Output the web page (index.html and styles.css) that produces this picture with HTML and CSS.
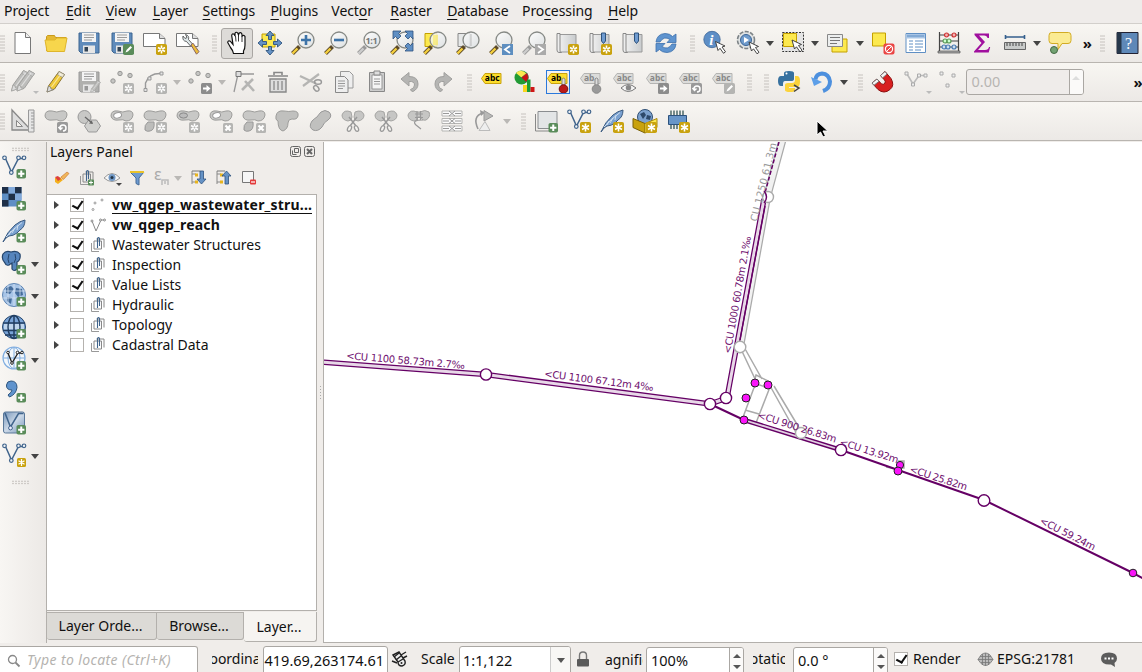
FILE: index.html
```html
<!DOCTYPE html>
<html lang="en">
<head>
<meta charset="utf-8">
<title>Map editor</title>
<link rel="stylesheet" href="styles.css">
</head>
<body>
<svg class="defs" aria-hidden="true">
<defs>
<linearGradient id="lens" x1="0" y1="0" x2="1" y2="1"><stop offset="0" stop-color="#fff"/><stop offset="1" stop-color="#d8dde0"/></linearGradient>
<linearGradient id="paper" x1="0" y1="0" x2="1" y2="0"><stop offset="0" stop-color="#eee"/><stop offset="1" stop-color="#c8cbcd"/></linearGradient>
<linearGradient id="sky" x1="0" y1="0" x2="1" y2="1"><stop offset="0" stop-color="#7796ba"/><stop offset=".5" stop-color="#ccd9e8"/><stop offset="1" stop-color="#7796ba"/></linearGradient>
<g id="b-star"><rect x="13" y="13" width="11" height="11" rx="1.8" fill="var(--badge,#c9a20e)"/><path d="M18.5 14.5v8M15 16.5l7 4M22 16.5l-7 4" stroke="#fff" stroke-width="1.6"/></g>
<g id="b-star2"><use href="#b-star"/><circle cx="18.5" cy="18.5" r="1" fill="var(--badge,#c9a20e)"/></g>
<g id="b-plus"><rect x="14.500" y="14" width="9.500" height="9.500" rx="1.800" fill="#5a8c5a"/><path d="M19.250 15.600v6.300M16.100 18.750h6.300" stroke="#fff" stroke-width="2"/></g>
<g id="b-arrow"><rect x="13" y="13" width="11" height="11" rx="1.5" fill="#8c8c8c"/><path d="M15 17.500h3.500v-2.500l4 3.500-4 3.500v-2.500H15z" fill="#fff"/></g>
<g id="b-rot"><rect x="13" y="13" width="11" height="11" rx="1.500" fill="#999"/><path d="M16 19a3 3 0 1 1 3 3M14.500 18l2 2.500 2-2" fill="none" stroke="#fff" stroke-width="1.500"/></g>
<g id="b-x"><rect x="14" y="14" width="10" height="10" rx="1.500" fill="#b5b5b3"/><path d="M16.500 16.500l5 5M21.500 16.500l-5 5" stroke="#fff" stroke-width="2.200"/></g>
<g id="b-pen"><rect x="13" y="13" width="11" height="11" rx="1.800" fill="var(--badge,#5a8c5a)"/><path d="M15.500 21.500l1-2.500 4-4 1.500 1.500-4 4z" fill="#fff"/></g>
<g id="cursor"><path d="M0 0l2.500 9 2-2.200 3.500 5 2-1.500-3.500-4.800 3-1z" fill="#fff" stroke="#333" stroke-width=".9"/></g>
<g id="new"><path d="M4 1.500h10.500l5 5V22.500H4z" fill="#fff" stroke="#777"/><path d="M14.500 1.500v5h5" fill="#eee" stroke="#777"/></g>
<g id="open"><path d="M2.500 20V5.500l1-1h7l1 2H22v3" fill="#e5b933" stroke="#c99a1b"/><path d="M1 9h10l2-2h10l-2.500 13.500H3z" fill="#f7d64c" stroke="#dfb52b"/></g>
<g id="disk"><path d="M2 2h20v20H4l-2-2z" fill="var(--disk,#5f8bbb)" stroke="var(--line,#3d6590)"/><path d="M5 2h14v9H5z" fill="#f4f4f4"/><path d="M7 4h10M7 6.500h10M7 9h8" stroke="#999" stroke-width="1"/><path d="M6 14.500h12V22H6z" fill="#e6e6e6"/><path d="M7.500 16h3.500v4.500H7.500z" fill="var(--line,#345)"/></g>
<g id="layout"><path d="M.5 2.500h16l5.500 5v8H.5z" fill="#fff" stroke="#777"/><path d="M16.500 2.500v5H22" fill="#ddd" stroke="#777"/></g>
<g id="wrench"><path d="M7 5q-1 5 3.500 5.500l4 4.500 2-2-4-4.500q1-4-3-5l1.500 3-2 1z" fill="#dfe8ea" stroke="#555" stroke-width=".9"/><path d="M15 14l2-1.800 6 8.500-2.500 2.500z" fill="#edbd3a" stroke="#866"/></g>
<g id="hand"><path d="M7 22.500Q6.500 19.500 4 16.500L1.200 11.500q.3-2.300 2.600-1.300l2.700 3.300L5.200 4.500Q5.500 2 7.700 3.200L8.500 5V2.300q1.200-2 2.800-.2L12 4l.5-1.700q1.800-1.600 2.800.4l.3 2.300q1.700-1.600 2.900.5V14q0 4-1.500 6v2.500z" transform="translate(1.500)" fill="#fff" stroke="#111" stroke-width="1.200"/><path d="M10.500 5l.5 5.500M13.500 4v6.500M17 5v6" stroke="#222" stroke-width=".9"/></g>
<g id="pan"><path d="M4 3h13v13H4z" fill="#fce94f" stroke="#c4a000"/><path d="M12 0l4 4.500h-2.500v4h-3v-4H8zM12 24l4-4.500h-2.500v-4h-3v4H8zM0 12l4.500-4v2.500h4v3h-4V16zM24 12l-4.500-4v2.500h-4v3h4V16z" fill="#6592c5" stroke="#2d527d" stroke-width=".9"/></g>
<g id="mag"><path d="M8.500 15.500L1.500 22.500" stroke="var(--hd,#5d4b2a)" stroke-width="4"/><path d="M6.500 17.500l-5 5" stroke="var(--hf,#f5cf3e)" stroke-width="2.400"/><circle cx="15" cy="9" r="8" fill="url(#lens)" fill-opacity=".8" stroke="#878a86" stroke-width="1.300"/></g>
<g id="zin"><use href="#mag"/><path d="M15 4v10M10 9h10" stroke="#3d73a8" stroke-width="2.600"/></g>
<g id="zout"><use href="#mag"/><path d="M10 9h10" stroke="#3d73a8" stroke-width="2.600"/></g>
<g id="z11"><use href="#mag"/><text x="8.500" y="12.500" class="t11">1:1</text></g>
<g id="zfull"><use href="#mag"/><path d="M3 0h8L8.500 2.500 11 5 8 8 5.500 5.500 3 8zM23 0v8l-2.500-2.500L18 8l-3-3 2.500-2.500L15 0zM23 20h-8l2.500-2.500L15 15l3-3 2.500 2.500L23 12z" fill="#5f8fc4" stroke="#2d527d" stroke-width=".8"/></g>
<g id="zsel"><path d="M2 2.500h12v13H2z" fill="#fce94f" stroke="#c4a000"/><use href="#mag"/><path d="M10 4h5v10h-5z" fill="#fce94f" opacity=".55"/></g>
<g id="zlay"><path d="M2 2.500h12v13H2z" fill="#e6e8e8" stroke="#888"/><use href="#mag"/><path d="M15 3v12" stroke="#bbb"/></g>
<g id="zprev"><use href="#mag"/><path d="M13 13h11v11H13z" fill="#5d8ec0"/><path d="M21 15l-5 3.500 5 3.500" fill="none" stroke="#fff" stroke-width="1.800"/></g>
<g id="znext"><use href="#mag"/><path d="M13 13h11v11H13z" fill="#aaa"/><path d="M16 15l5 3.500-5 3.500" fill="none" stroke="#fff" stroke-width="1.800"/></g>
<g id="roll"><path d="M5 3.500h16V21H6" fill="url(#paper)" stroke="#999"/><path d="M2 2.500h3V19q-.5 2.500 1.500 2.500H4Q2 21.500 2 19z" fill="#eee" stroke="#888"/></g>
<g id="mark"><path d="M13.500 2h4v8l-2 2.500-2-2.500z" fill="#6f9bd0" stroke="#2d527d"/></g>
<g id="refresh"><path d="M2 11Q3 3 11 2.500q5 0 7.500 3L22 3v8.500h-9L16 8.500Q10 4.500 6 11z" fill="#5f94cf" stroke="#3c70ac" stroke-width=".8"/><path d="M22 13q-1 8-9 8.500-5 0-7.500-3L2 21v-8.500h9L8 15.500q6 4 10-2.500z" fill="#5f94cf" stroke="#3c70ac" stroke-width=".8"/></g>
<g id="info"><circle cx="9" cy="8.500" r="8.200" fill="#5d8ec6" stroke="#3b6597" stroke-width=".8"/><text x="6.300" y="14" class="ti">i</text><use href="#cursor" x="12.500" y="10.500"/></g>
<g id="gear"><circle cx="10" cy="9" r="8.500" fill="#e0e3e4" stroke="#7d8386" stroke-width="1.600" stroke-dasharray="4 1.500"/><circle cx="10" cy="9" r="5.500" fill="#6f9bcc" stroke="#3b6597"/><path d="M8 6l5 3-5 3z" fill="#fff"/><use href="#cursor" x="13" y="11"/></g>
<g id="select"><path d="M1.500 1.500h21v19h-21z" fill="#e4e4e4" stroke="#333" stroke-dasharray="2 1.300"/><path d="M2.500 2.500h13v13h-13z" fill="#fce94f" stroke="#c4a000"/><use href="#cursor" x="11" y="9"/></g>
<g id="form"><path d="M6 8h15v13H6z" fill="#fce94f" stroke="#c4a000"/><path d="M1.500 3.500h15v12h-15z" fill="#eceeee" stroke="#888"/><path d="M4 6.500h10M4 9.500h10M4 12.500h7" stroke="#777"/></g>
<g id="desel"><path d="M1.500 2h13v13h-13z" fill="#fce94f" stroke="#c4a000"/><rect x="12.500" y="12.500" width="11" height="11" rx="2" fill="#ea4545"/><circle cx="18" cy="18" r="3.600" fill="none" stroke="#fff" stroke-width="1.200"/><path d="M15.500 20.500l5-5" stroke="#fff"/></g>
<g id="table"><path d="M2 2.500h19.500v19H2z" fill="#fff" stroke="#5f8fc4"/><path d="M2.500 3h18.500v4.500H2.500z" fill="#a9c5e5"/><path d="M5 10h4M5 13h4M5 16h4M5 19h4M11 10h8M11 13h8M11 16h8M11 19h6M3 5h17" stroke="#5f8fc4"/></g>
<g id="abacus"><path d="M2.500 1v19.500M21.500 1v19.500M2 4h20M2 10h20M2 16h20" stroke="#444" stroke-width="1.200"/><path d="M1 20h22v2H1z" fill="#aaa" stroke="#555" stroke-width=".7"/><g stroke-width="1.200"><g fill="#f6b2b2" stroke="#c33"><circle cx="9.500" cy="4" r="2"/><circle cx="17" cy="4" r="2"/></g><g fill="#cfc" stroke="#5a9a5a"><circle cx="8" cy="10" r="2"/><circle cx="12" cy="10" r="2"/></g><g fill="#cde" stroke="#4b7db5"><circle cx="7" cy="16" r="2"/><circle cx="11" cy="16" r="2"/><circle cx="17" cy="16" r="2"/></g></g></g>
<g id="sigma"><path d="M4.500 2.500H19V7h-1.500Q17 4.500 14 4.500H9l6 6.500-7 8h7q3.500 0 4-3h1.200l-1.500 5.500H4v-1L11.500 12 4.500 4z" fill="#a00f9e"/></g>
<g id="ruler"><path d="M2 6h20M2.500 4v4M21.500 4v4" stroke="#355f8d" stroke-width="1.600"/><path d="M1.500 11.500h21v7h-21z" fill="#c9cbca" stroke="#666"/><path d="M4 12v3M7 12v3M10 12v3M13 12v3M16 12v3M19 12v3" stroke="#444"/></g>
<g id="tip"><path d="M3.500 1.500h17q2.500 0 2.500 3v5q0 3-3 3h-6L10 18.500V12.500H4q-3 0-3-3v-5q0-3 2.500-3z" fill="#fbeb93" stroke="#d2ab24"/><circle cx="6" cy="19" r="3.500" fill="#72a272" stroke="#446b44"/></g>
<g id="book"><path d="M3 1.500h21v21H3z" fill="#5e88b8" stroke="#223"/><path d="M3 1.500h4.500v21H3z" fill="#26374b"/><text x="11" y="17.500" class="tq">?</text></g>
<g id="pencil"><path d="M3 22l1.500-6L15 1.500l5.500 3-10 14.500z" fill="var(--pen,#efc939)" stroke="var(--pl,#8c7430)"/><path d="M15 1.500l5.500 3-2 3-5-3z" fill="var(--tip,#eee8d0)" stroke="var(--pl,#888)" stroke-width=".7"/><path d="M4.500 16l2 1 .5 2 3 .5L3 22z" fill="#ddd" stroke="var(--pl,#777)" stroke-width=".7"/><path d="M7.500 17L17 4" stroke="#fff" opacity=".5" stroke-width="1.200"/></g>
<g id="pencils"><use href="#pencil" x="-2.500" y="-1"/><use href="#pencil" x="3" y="-1"/></g>
<g id="dots"><g fill="#c5c5c3" stroke="#979795"><circle cx="3" cy="11" r="2.200"/><circle cx="10" cy="3.500" r="2.200"/><circle cx="20" cy="5.500" r="2.200"/></g></g>
<g id="curve"><path d="M2.500 20V13Q6 3 18 3.500" fill="none" stroke="#999" stroke-width="1.400"/><path d="M1 18.500h3v3H1zM5 7h3v3H5zM17 2h3v3h-3z" fill="#e4e4e4" stroke="#999"/></g>
<g id="vertex"><path d="M1 22L5 4M8 4h13" stroke="#999" stroke-width="1.300"/><path d="M3 1.500h5v5H3z" fill="#ddd" stroke="#777"/><path d="M9 20L20 9M12 11l9 10" stroke="#b5b5b3" stroke-width="2.600"/></g>
<g id="trash"><path d="M2 6h20M8 5V2.500h8V5" stroke="#888" fill="none" stroke-width="1.600"/><path d="M4 9h16v13H4z" fill="#ddd" stroke="#888" stroke-width="1.400"/><path d="M8 11v9M12 11v9M16 11v9" stroke="#999" stroke-width="1.600"/></g>
<g id="cut"><path d="M1 6l16 7.500M4 16L20 4" stroke="#b5b5b3" stroke-width="2.200"/><ellipse cx="19" cy="12" rx="3.500" ry="2.200" fill="none" stroke="#999" stroke-width="1.400"/><ellipse cx="17" cy="18.500" rx="2.200" ry="3.200" transform="rotate(-40 17 18)" fill="none" stroke="#999" stroke-width="1.400"/></g>
<g id="copy"><path d="M8.500 1.500h9l3.500 3.500v13H8.500z" fill="#eee" stroke="#999"/><path d="M3.500 6.500h9L16 10v12.500H3.500z" fill="#eee" stroke="#888"/><path d="M6 11h7M6 13.500h7M6 16h7M6 18.500h5" stroke="#999"/></g>
<g id="paste"><path d="M4.500 2.500h15v19h-15z" fill="#ccc" stroke="#888"/><path d="M7 5h10v14H7z" fill="#f5f5f5" stroke="#999"/><path d="M9 1h6v4H9z" fill="#ddd" stroke="#888"/><path d="M9 9h6M9 11.500h6M9 14h6" stroke="#999"/></g>
<g id="undo"><path d="M3 9l8-6.500v4q9 0 9 7.500 0 5-5 7.500-2 0-2.500-2 4-1 4-4.500 0-4-5.500-3.500v4.500z" fill="#b5b5b3" stroke="#a0a09e"/></g>
<g id="tag"><path d="M1.500 8.500L5 3.500h16v10H5z" fill="var(--tag,#fcdd2c)" stroke="var(--tl,#c9a20e)"/></g>
<g id="abc"><use href="#tag"/><text x="4.800" y="11.300" class="tabc">abc</text></g>
<g id="ab"><use href="#tag"/><text x="5" y="11.300" class="tabc">ab</text></g>
<g id="pin"><path d="M17.500 9v8" stroke="#ddd" stroke-width="3"/><path d="M16 17V9q1.500-2 3 0v8" fill="none" stroke="#888"/><circle cx="17.500" cy="19" r="4.300" fill="var(--pin,#bc1a1a)" stroke="var(--pinl,#701010)"/></g>
<g id="diag"><circle cx="8.500" cy="7.500" r="7" fill="#229a35"/><path d="M8.500 7.500L3 3Q8-2 14 4z" fill="#fce94f"/><path d="M8.500 7.500L14 3q3 6-1 9z" fill="#c91414" stroke="#555" stroke-width=".5"/><path d="M10 15h4v7h-4z" fill="#f8d41d"/><path d="M14 9.500h3.500V22H14z" fill="#1a9b36"/><path d="M17.500 17h4v5h-4z" fill="#cf1616"/></g>
<g id="eye"><path d="M9 18q7-7 15 0-8 7-15 0z" fill="#f4f4f4" stroke="#777"/><circle cx="16.500" cy="17.800" r="2.700" fill="#888"/></g>
<g id="python"><path d="M7 7V3q0-2 5-2t5 2v6q0 2-3 2H8q-2 0-2 3v2H4q-3 0-3-5t3-5h8" fill="#37719f"/><path d="M18 6h2q3 0 3 5 0 6-3 6h-8v1h6v2q0 2-5 2t-5-2v-5q0-2 3-2h4q3 0 3-3z" fill="#fbd33b"/><circle cx="9.500" cy="3.500" r="1" fill="#fff"/><path d="M17 15l5 3-5 3.500" fill="none" stroke="#444" stroke-width="1.500"/></g>
<g id="reload"><path d="M5.500 9.500Q6 4 12 3.500q7 .5 8 8 0 7-7 9.500" fill="none" stroke="#4d90de" stroke-width="4"/><path d="M1 7l3 9 8-4z" fill="#5d9fe8"/></g>
<g id="magnet"><path d="M1 13l5-4 4.500 5q2 1 3.500-1 1-2-1-3.500l-3.500-4L14 1.500l6 7q4 7-1 11-6 5-12 0z" fill="#d81f1f" stroke="#8c1010"/><path d="M1 13l5-4 2 2.300-5 4zM9.500 5.500L14 1.500l2 2.500-4.500 4z" fill="#f6f6f6" stroke="#777"/></g>
<g id="vee"><path d="M3.500 3.500L9.500 17 16.500 3.500h5" fill="none" stroke="#40648c" stroke-width="1.500"/><g fill="#edf1f5" stroke="#40648c" stroke-width="1.200"><circle cx="2.500" cy="2.800" r="1.800"/><circle cx="9.300" cy="17.500" r="1.800"/><circle cx="16.500" cy="2.800" r="1.800"/><circle cx="22" cy="2.800" r="1.800"/></g></g>
<g id="vgrey"><path d="M3 4l6 10L15 5.500h7" fill="none" stroke="#bbb" stroke-width="1.600"/><path d="M1 2h3v3H1zM7.500 13h3v3h-3zM13.500 4h3v3h-3zM20 4h3v3h-3z" fill="#eee" stroke="#aaa"/></g>
<g id="sq3"><path d="M3 2h3v3H3zM15 4h3v3h-3zM9 14h3v3H9z" fill="#eee" stroke="#aaa"/></g>
<g id="setsq"><path d="M1 1l19 20H1z" fill="#ddd" stroke="#888" stroke-width="1.300"/><path d="M5.500 11.500l6 6h-6z" fill="#f2f0ed" stroke="#888"/><path d="M17.500 1h5.500v22h-5.500z" fill="#e6e6e6" stroke="#999"/><path d="M20 4h3M20 7h3M20 10h3M20 13h3M20 16h3M20 19h3" stroke="#999"/></g>
<g id="blob"><path d="M1 7Q1 1 8 2q5 2 9 0 6-1 6 4-1 6-7 6-3-2-7-1-7 1-8-4z" fill="#c8c8c6" stroke="#9d9d9b"/></g>
<g id="ring"><use href="#blob"/><ellipse cx="7.500" cy="6.500" rx="4" ry="2.600" transform="rotate(-15 7 6)" fill="#fff" stroke="#999"/></g>
<g id="part"><path d="M2 21q-1-5 3-8h6q1 8-4 9-3 1-5-1z" fill="#bdbdbb" stroke="#999"/></g>
<g id="simp"><circle cx="7.500" cy="8" r="6.500" fill="#c8c8c6" stroke="#999"/><path d="M11.500 11h8l4 6-4 6h-8l-4-6z" fill="#d0d0ce" stroke="#999"/><path d="M8 8l7 6" stroke="#666" stroke-width="1.300"/><path d="M16 15l-4-.5 2.800-3z" fill="#666"/></g>
<g id="resh"><path d="M1 7Q2 1 9 2q5 1 9 0 6 0 5 5-1 4-6 3-4 0-4 4 0 6-5 8-5-1-5-10-3-1-2-5z" fill="#c0c0be" stroke="#9d9d9b"/></g>
<g id="offs"><path d="M13 3q4-3 8 0 4 4-1 8-4 2-6 7-4 5-9 3-5-3-1-9 3-3 5-4 2-3 4-5z" fill="#c0c0be" stroke="#999"/></g>
<g id="split"><path d="M10 3Q3 0 1 6q0 5 6 6 4 0 4-4zM14 3q7-3 9 3 0 5-6 6-4 0-4-4z" fill="#c6c6c4" stroke="#a5a5a3"/><path d="M8 8l7 9M16 8l-7 9" stroke="#999" stroke-width="1.500"/><ellipse cx="8.500" cy="19.500" rx="1.800" ry="3" transform="rotate(25 8.500 19.500)" fill="#f4f2ef" stroke="#999" stroke-width="1.300"/><ellipse cx="15.500" cy="19.500" rx="1.800" ry="3" transform="rotate(-25 15.500 19.500)" fill="#f4f2ef" stroke="#999" stroke-width="1.300"/></g>
<g id="merge"><path d="M10 3Q3 0 1 6q0 5 6 6 4 0 4-4h3q1 4 5 3 5-3 3-8-4-3-9 0z" fill="#c6c6c4" stroke="#a5a5a3"/><path d="M8 5h8M8 8.500h8M10 2v9M13.500 2v9M16 11q-12 0-7 5l5 4" fill="none" stroke="#999" stroke-width="1.200"/></g>
<g id="mattr"><path d="M2 2h20v5H2zM2 9.500h20v5H2zM2 17h20v5H2z" fill="#fbfbfb" stroke="#b5b5b3"/><path d="M3 4.500h6M15 4.500h6M3 12h6M15 12h6M3 19.500h6M15 19.500h6M9 2l6 5M15 2L9 7M9 9.500l6 5M15 9.500l-6 5M9 17l6 5M15 17l-6 5" stroke="#999"/></g>
<g id="rotsym"><path d="M5 20Q-1 7 10 4" fill="none" stroke="#999" stroke-width="1.600"/><path d="M7 1l5 2.500-4 3.500z" fill="#999"/><path d="M11 1.500L20 7l-9 5z" fill="#b8b8b6" stroke="#999"/><path d="M6 21.500l6-9 5 9z" fill="#eee" stroke="#bbb"/></g>
<g id="layers"><path d="M1.500 5v17H20" fill="none" stroke="#888"/><path d="M4 2.500h19v17H4z" fill="#e3e5e6" stroke="#8a8d90"/></g>
<g id="feather"><path d="M1 23Q5 13 13 6 18 2 23 1q0 7-5 10l-3 3q-4 3-8 3Q4 18 1 23z" fill="#7ba2d1" stroke="#39597f"/><path d="M4 18Q11 10 20 3.500M9 12l-2 4M13 9l-3 5M16 6l-1 5" fill="none" stroke="#d5e2f0" stroke-width=".9"/></g>
<g id="globebox"><circle cx="12" cy="8" r="7.500" fill="#7da2cf" stroke="#2f4f74"/><path d="M7 5l4-2 2 3-3 4zM14 6l4 1-1 4-4-1z" fill="#2d496b"/><path d="M0 9.500l12 5V24L0 18.500z" fill="#c9a20e" stroke="#7a6108"/><path d="M12 14.500l12-5v9L12 24z" fill="#fce94f" stroke="#a98708"/></g>
<g id="chip"><path d="M2.500 6.500h18v9h-18z" fill="#6795c8" stroke="#2d527d"/><path d="M5 1.500V6M8 1.500V6M11 1.500V6M14 1.500V6M17 1.500V6M5 16v4M8 16v4M11 16v4M14 16v4" stroke="#355" stroke-width="1.300"/></g>
<g id="raster"><path d="M0 0h19.500v19.500H0z" fill="#5e8fc5"/><path d="M0 0h6.500v6.500H0zM13 0h6.500v6.500H13zM6.500 6.500H13V13H6.500zM0 13h6.500v6.500H0z" fill="#1f3048"/><path d="M6.500 0H13v6.500H6.500zM13 6.500h6.500V13H13z" fill="#82aadb"/></g>
<g id="eleph"><path d="M1 3Q4-1 9 1q6-2 9 2 1 6-3 8v7q-3 3-5 0v-6q-2 1-3 2-3 1-4-2-4-4-2-9z" fill="#5685bd" stroke="#26466c" stroke-width="1.200"/><path d="M7 3q-2 6 0 9M13 3q2 5-1 9" fill="none" stroke="#26466c"/></g>
<g id="globe1"><circle cx="12" cy="12" r="11.500" fill="#a7c4e6" stroke="#5f86b4"/><path d="M4 5l5-2 3 3-4 5-4-1zM14 5l6 1 1 6-5 2-3-4zM5 14l5 1-1 6-4-3z" fill="#456d9c"/><path d="M1 8h22M1 15h22M12 1v22M6 2v20M18 2v20" stroke="#dfeaf6" stroke-width=".7"/></g>
<g id="globe2"><circle cx="12" cy="12" r="11.500" fill="#79a4d8" stroke="#26466c"/><path d="M2 9h20v5.500H2z" fill="#dce9f7" opacity=".7"/><path d="M1 8h22M1 15.500h22M3 20h16M12 1v22" stroke="#203d60" stroke-width="1.500"/><ellipse cx="12" cy="12" rx="6" ry="11.500" fill="none" stroke="#203d60" stroke-width="1.400"/></g>
<g id="globe3"><circle cx="12" cy="11" r="11" fill="#f3f7fb" stroke="#81aee0" stroke-width="1.200"/><path d="M1 11h22M12 1v20" stroke="#81aee0"/><ellipse cx="12" cy="11" rx="6" ry="10.500" fill="none" stroke="#81aee0"/><path d="M6 6l4 10 6-10h4" fill="none" stroke="#222" stroke-width="1.300"/><g fill="#fff" stroke="#222"><circle cx="6" cy="5.500" r="1.300"/><circle cx="10" cy="16" r="1.300"/><circle cx="15.500" cy="5.500" r="1.300"/><circle cx="20" cy="5.500" r="1.300"/></g></g>
<g id="comma"><path d="M9 2q6 0 6 6.500-1 7-7.500 9.500l-1.500-2q4-3 4-5-6 0-5.500-5Q5 2 9 2z" fill="#5f93cd" stroke="#30577f"/></g>
<g id="virt"><rect x="1.500" y="1" width="21" height="21" rx="2" fill="url(#sky)" stroke="#5a7899"/><path d="M3 2l5.500 14L16.500 2.500h5" fill="none" stroke="#40648c" stroke-width="1.500"/><circle cx="8.500" cy="17" r="1.900" fill="#eef" stroke="#40648c"/></g>
<g id="grp"><path d="M1.500 6v8.500H9" fill="none" stroke="#999"/><path d="M4 4h7.500v8H4zM6.500 2h7.500v8.500" fill="none" stroke="#888"/><path d="M7.500 11V1.500q1-2 2 0V9" fill="none" stroke="#40648c" stroke-width="1.100"/></g>
<g id="brush"><path d="M1 8l5-1 3 3-5 4-3-2z" fill="#f3b01d"/><path d="M1 7l3-1 3 3-3 2z" fill="#dd3f3f"/><path d="M7 7l6-5 2 1.500-5.500 6z" fill="#f0b65a" stroke="#c9702d" stroke-width=".6"/></g>
<g id="sfun"><path d="M1 2h14L10 8v7l-3-1.500V8z" fill="#6e9bd0" stroke="#446b98"/><path d="M1 1h14v2H1z" fill="#e9c32c"/></g>
<g id="seye"><path d="M0 8q8-9 16 0-8 7-16 0z" fill="#f7f7f7" stroke="#999"/><circle cx="8" cy="7.500" r="3.500" fill="#6e96c4"/><circle cx="8" cy="7.500" r="1.500" fill="#234"/><path d="M12 13h6l-3 3z" fill="#444"/></g>
<g id="tree"><path d="M1 1v13M1 4h4M1 12h4" stroke="#888" fill="none"/><path d="M1 1h8" stroke="#777"/><path d="M4 3.500h3v3H4zM4 10.500h3v3H4z" fill="#e7b41f"/></g>
</defs>
</svg>

<div class="app">
<nav class="menu">
<span style="width:47px">Project</span><span style="width:25px"><u>E</u>dit</span><span style="width:32px"><u>V</u>iew</span><span style="width:35px"><u>L</u>ayer</span><span style="width:53px"><u>S</u>ettings</span><span style="width:46px"><u>P</u>lugins</span><span style="width:44px">Vect<u>o</u>r</span><span style="width:42px"><u>R</u>aster</span><span style="width:60px"><u>D</u>atabase</span><span style="width:71px">Pro<u>c</u>essing</span><span style="width:31px"><u>H</u>elp</span>
</nav>

<div class="bar">
<i class="grip first"></i>
<b><svg><use href="#new"/></svg></b><b><svg><use href="#open"/></svg></b><b><svg><use href="#disk"/></svg></b><b><svg><use href="#disk"/><use href="#b-pen"/></svg></b><b><svg><use href="#layout"/><use href="#b-star2"/></svg></b><b><svg><use href="#layout"/><use href="#wrench"/></svg></b>
<i class="grip"></i>
<b class="on"><svg><use href="#hand"/></svg></b><b><svg><use href="#pan"/></svg></b><b><svg><use href="#zin"/></svg></b><b><svg><use href="#zout"/></svg></b><b class="dim"><svg><use href="#z11"/></svg></b><b><svg><use href="#zfull"/></svg></b><b><svg><use href="#zsel"/></svg></b><b><svg><use href="#zlay"/></svg></b><b><svg><use href="#zprev"/></svg></b><b class="dim"><svg><use href="#znext"/></svg></b><b><svg><use href="#roll"/><use href="#b-star2"/></svg></b><b><svg><use href="#roll"/><use href="#mark"/><use href="#b-star2"/></svg></b><b><svg><use href="#roll"/><use href="#mark"/></svg></b><b><svg><use href="#refresh"/></svg></b>
<i class="grip"></i>
<b><svg><use href="#info"/></svg></b><b><svg><use href="#gear"/></svg></b><i class="arr"></i><b><svg><use href="#select"/></svg></b><i class="arr"></i><b><svg><use href="#form"/></svg></b><i class="arr"></i><b><svg><use href="#desel"/></svg></b><b><svg><use href="#table"/></svg></b><b><svg><use href="#abacus"/></svg></b><b><svg><use href="#sigma"/></svg></b><b><svg><use href="#ruler"/></svg></b><i class="arr"></i><b><svg><use href="#tip"/></svg></b><span class="more">»</span>
<i class="grip"></i>
<b><svg><use href="#book"/></svg></b>
</div>

<div class="bar">
<i class="grip first"></i>
<b class="dim sub"><svg><use href="#pencils"/></svg></b><b><svg><use href="#pencil"/></svg></b><b class="dim"><svg><use href="#disk"/><use href="#pencil" x="22" y="18" transform="scale(.55)"/></svg></b><b class="dim"><svg><use href="#dots"/><use href="#b-star2"/></svg></b><b class="dim"><svg><use href="#curve"/><use href="#b-star2"/></svg></b><i class="arr off"></i><b class="dim"><svg><use href="#dots"/><use href="#b-arrow"/></svg></b><i class="arr off"></i><b><svg><use href="#vertex"/></svg></b><b><svg><use href="#trash"/></svg></b><b><svg><use href="#cut"/></svg></b><b><svg><use href="#copy"/></svg></b><b><svg><use href="#paste"/></svg></b><b><svg><use href="#undo"/></svg></b><b><svg class="flip"><use href="#undo"/></svg></b>
<i class="grip"></i>
<b><svg><use href="#abc"/></svg></b><b><svg><use href="#diag"/></svg></b><b class="pinned"><svg><use href="#ab"/><use href="#pin"/></svg></b><b class="dim"><svg><use href="#ab"/><use href="#pin"/></svg></b><b class="dim"><svg><use href="#abc"/><use href="#eye"/></svg></b><b class="dim"><svg><use href="#abc"/><use href="#b-arrow"/></svg></b><b class="dim"><svg><use href="#abc"/><use href="#b-rot"/></svg></b><b class="dim"><svg><use href="#abc"/><use href="#b-pen"/></svg></b>
<i class="grip"></i><i class="grip wide-gap"></i>
<b><svg><use href="#python"/></svg></b><b><svg><use href="#reload"/></svg></b><i class="arr"></i>
<i class="grip"></i>
<b><svg><use href="#magnet"/></svg></b><b class="sub"><svg><use href="#vgrey"/></svg></b><b class="sub"><svg><use href="#sq3"/></svg></b>
<div class="spin tall"><span>0.00</span><em></em></div><span class="more last">»</span>
</div>

<div class="bar third">
<i class="grip first"></i>
<b><svg><use href="#setsq"/></svg></b><b><svg><use href="#blob"/><use href="#b-rot"/></svg></b><b><svg><use href="#simp"/></svg></b><b class="dim"><svg><use href="#ring"/><use href="#b-star2"/></svg></b><b class="dim"><svg><use href="#blob"/><use href="#part"/><use href="#b-star2"/></svg></b><b class="dim"><svg><use href="#blob"/><ellipse cx="7.500" cy="6.500" rx="4" ry="2.600" fill="#bbb" stroke="#888"/><use href="#b-star2"/></svg></b><b><svg><use href="#ring"/><use href="#b-x"/></svg></b><b><svg><use href="#blob"/><use href="#part"/><use href="#b-x"/></svg></b><b><svg><use href="#resh"/></svg></b><b><svg><use href="#offs"/></svg></b><b><svg><use href="#split"/></svg></b><b><svg><use href="#split"/></svg></b><b><svg><use href="#merge"/></svg></b><b><svg><use href="#mattr"/></svg></b><b><svg><use href="#rotsym"/></svg></b><i class="arr off"></i>
<i class="grip"></i>
<b><svg><use href="#layers"/><use href="#b-plus"/></svg></b><b><svg><use href="#vee"/><use href="#b-star"/></svg></b><b><svg><use href="#feather"/><use href="#b-star"/></svg></b><b><svg><use href="#globebox"/><use href="#b-star"/></svg></b><b><svg><use href="#chip"/><use href="#b-star"/></svg></b>
</div>

<main class="work">
<aside class="side">
<i class="hgrip"></i>
<div><svg><use href="#vee"/><use href="#b-plus"/></svg></div>
<div><svg><use href="#raster"/><use href="#b-plus"/></svg></div>
<div><svg><use href="#feather"/><use href="#b-plus"/></svg></div>
<div><svg><use href="#eleph"/><use href="#b-plus"/></svg><i class="arr"></i></div>
<div><svg><use href="#globe1"/><use href="#b-plus"/></svg><i class="arr"></i></div>
<div><svg><use href="#globe2"/><use href="#b-plus"/></svg></div>
<div><svg><use href="#globe3"/><use href="#b-plus"/></svg><i class="arr"></i></div>
<div><svg><use href="#comma"/><use href="#b-plus"/></svg></div>
<div><svg><use href="#virt"/><use href="#b-plus"/></svg></div>
<div><svg><use href="#vee"/><g class="low-badge"><rect x="15" y="15" width="9" height="9" rx="1.500" fill="#c9a20e"/><path d="M19.500 16v7M16.500 17.800l6 3.400M22.500 17.800l-6 3.400" stroke="#fff" stroke-width="1.300"/></g></svg><i class="arr"></i></div>
<i class="hgrip"></i>
</aside>

<section class="dock">
<header><span>Layers Panel</span>
<svg class="wb" viewBox="0 0 11 11"><rect x=".5" y=".5" width="10" height="10" rx="2"/><path d="M4.500 2.500h4v4h-4zM2.500 4.500v4h4"/></svg>
<svg class="wb" viewBox="0 0 11 11"><rect x=".5" y=".5" width="10" height="10" rx="2"/><path d="M3 3l5 5M8 3L3 8" stroke-width="2"/></svg>
</header>
<div class="tools">
<svg><use href="#brush"/></svg><svg><use href="#grp"/><rect x="9" y="9.500" width="6" height="6" rx="1" fill="#5a8c5a"/><path d="M12 10.500v4M10 12.500h4" stroke="#fff"/></svg><svg><use href="#seye"/></svg><svg><use href="#sfun"/></svg><svg><text x="0" y="10" class="eps">ε</text><path d="M8 15V10h6v5M11 11v3" stroke="#bbb" stroke-width="1.500" fill="none"/></svg><i class="arr off"></i><svg><use href="#tree"/><path d="M9 1h3.500v8H15l-4.500 5L6 9h3z" fill="#6592c5" stroke="#2d527d" stroke-width=".8"/></svg><svg><use href="#tree"/><path d="M9 14h3.500V6H15l-4.500-5L6 6h3z" fill="#6592c5" stroke="#2d527d" stroke-width=".8"/></svg><svg><path d="M1.500 1.500h11v11h-11z" fill="#f6f6f6" stroke="#777"/><rect x="9" y="9.500" width="6" height="5" rx="1" fill="#e33b3b"/><path d="M10 12h4" stroke="#fff" stroke-width="1.200"/></svg>
</div>
<ul class="tree">
<li><i></i><s class="ck"></s><svg><g fill="#fff" stroke="#999"><circle cx="3" cy="12.500" r="1"/><circle cx="5" cy="6" r="1"/><circle cx="12" cy="3" r="1"/></g></svg><strong class="active">vw_qgep_wastewater_stru...</strong></li>
<li><i></i><s class="ck"></s><svg><path d="M2 4l4 10 5-11h4" fill="none" stroke="#888"/><g fill="#fff" stroke="#888"><circle cx="2" cy="4" r="1"/><circle cx="10.500" cy="3" r="1"/><circle cx="14.500" cy="3" r="1"/></g></svg><strong>vw_qgep_reach</strong></li>
<li><i></i><s class="ck"></s><svg><use href="#grp"/></svg><span>Wastewater Structures</span></li>
<li><i></i><s class="ck"></s><svg><use href="#grp"/></svg><span>Inspection</span></li>
<li><i></i><s class="ck"></s><svg><use href="#grp"/></svg><span>Value Lists</span></li>
<li><i></i><s></s><svg><use href="#grp"/></svg><span>Hydraulic</span></li>
<li><i></i><s></s><svg><use href="#grp"/></svg><span>Topology</span></li>
<li><i></i><s></s><svg><use href="#grp"/></svg><span>Cadastral Data</span></li>
</ul>
<div class="tabs"><span>Layer Orde...</span><span>Browse...</span><span class="cur">Layer...</span></div>
</section>
<div class="splitter"></div>

<svg class="map" viewBox="324 142 818 500">
<g class="wide grey"><path class="o" d="M783 138L767 197L740 347"/><path class="m" d="M783 138L767 197L740 347"/></g>
<path class="thin gl" d="M740 347L756 381M744 347L762 379M769 384L798 436M774 386L804 436M756 375l12 6v7l-14-5zM755 385l-13 35 14 3 14-36M745 410l14 4M886 467l10 2 6-8M898 461h6v7h-8"/>
<path class="dash" d="M779 142L763 200"/>
<g class="wide pur"><path class="o" d="M764 199L727 398L710 404L486 374.500L322 362"/><path class="m" d="M764 199L727 398L710 404L486 374.500L322 362"/></g>
<path class="pl" d="M765 206L740 340"/>
<g class="narrow"><path class="o" d="M744 420L841 450"/><path class="m" d="M744 420L841 450"/></g>
<path class="main" d="M710 404L744 420M841 450L898 470L984 500L1133 573L1146 580"/>
<g class="node gn"><circle cx="768" cy="197" r="5.500"/><circle cx="740" cy="347" r="5.800"/><circle cx="801" cy="433" r="5.500"/></g>
<path d="M764 191q5 6 0 12" class="pl"/>
<g class="node"><circle cx="486" cy="374.500" r="5.600"/><circle cx="710" cy="404" r="5.600"/><circle cx="726" cy="398" r="5.600"/><circle cx="841" cy="450" r="5.600"/><circle cx="984" cy="500.500" r="5.800"/></g>
<g class="lab">
<text transform="translate(346 359) rotate(4.700)" textLength="119">&lt;CU 1100 58.73m 2.7‰</text>
<text transform="translate(544 377) rotate(7.300)" textLength="110">&lt;CU 1100 67.12m 4‰</text>
<text transform="translate(730.500 354) rotate(-80)" textLength="119">&lt;CU 1000 60.78m 2.1‰</text>
<text class="gt" transform="translate(757 222) rotate(-76)" textLength="94">CU 1250 61.3m 6.</text>
<text transform="translate(757 418) rotate(17.500)" textLength="82">&lt;CU 900 26.83m</text>
<text transform="translate(839 445) rotate(17.500)" textLength="61">&lt;CU 13.92m</text>
<text transform="translate(909 472) rotate(18)" textLength="60">&lt;CU 25.82m</text>
<text transform="translate(1039 523) rotate(27)" textLength="61">&lt;CU 59.24m</text>
</g>
<g class="pink"><circle cx="755" cy="383" r="4"/><circle cx="768" cy="385" r="4"/><circle cx="746" cy="398" r="4"/><circle cx="744" cy="420" r="4"/><circle cx="900" cy="465" r="3.600"/><circle cx="898" cy="471" r="4"/><circle cx="1133" cy="573" r="3.800"/></g>
</svg>
</main>

<footer class="status">
<div class="locate"><svg width="14" height="14"><circle cx="5.500" cy="5.500" r="4" fill="none" stroke="#888" stroke-width="1.300"/><path d="M8.500 8.500l4 4" stroke="#888" stroke-width="1.800"/></svg><span>Type to locate (Ctrl+K)</span></div>
<div class="clip coord"><span>oordina</span></div>
<div class="field pos"><span>419.69,263174.61</span></div>
<svg class="bug" viewBox="0 0 17 17"><path d="M2 4l6-3 6 9q1 4-3 5-4 0-4-4z" fill="#eee" stroke="#222" stroke-width="1.400"/><path d="M3 6l5-4M5 9l5-4M7 11l5-3M1 10l5 2M10 4l5-3M12 7l4-2" stroke="#222" stroke-width="1.400"/><circle cx="10.500" cy="12" r="1" fill="#222"/></svg>
<span class="sc">Scale</span>
<div class="field combo"><span>1:1,122</span><em></em></div>
<svg class="lock" viewBox="0 0 12 16"><path d="M2.500 8V4.500q0-3.500 3.500-3.500t3.500 3.500V8" fill="none" stroke="#777" stroke-width="1.400"/><rect y="8" width="12" height="7.500" rx="1" fill="#5a5a5a"/></svg>
<div class="clip magn"><span>agnifie</span></div>
<div class="spin zoom"><span>100%</span><em></em></div>
<div class="clip rota"><span>otatio</span></div>
<div class="spin rot"><span>0.0 °</span><em></em></div>
<s class="ck"></s><span class="rend">Render</span>
<svg class="crs" viewBox="0 0 15 15"><path d="M0 7.500L3 3q4.500-4 9 0l3 4.500-3 4q-4.500 4-9 0z" fill="#bbb" stroke="#888"/><path d="M0 7.500h15M7.500 1v13M2 4.500h11M3 10.500h9M4.500 2v11M10.500 2v11" stroke="#777" fill="none" stroke-width=".8"/></svg>
<span class="epsg">EPSG:21781</span>
<svg class="msg" viewBox="0 0 17 15"><path d="M8 .5q8 0 8 6 0 3-2.500 4.500L14 15l-4-2.500Q0 13 0 6.500 0 .5 8 .5z" fill="#5c5c5c"/><path d="M3.500 6.500h2M7 6.500h2M10.500 6.500h2" stroke="#fff" stroke-width="1.800"/></svg>
</footer>
<svg class="pointer" viewBox="0 0 13 18"><path d="M1 1v14l3.500-3 2.500 5 2.500-1.200L7 11h4.800z" fill="#000" stroke="#fff"/></svg>
</div>
</body>
</html>
```
FILE: styles.css
```css
* { box-sizing: border-box; }
body { margin: 0; background: #f0edea; font: 14px/20px "Noto Sans", sans-serif; color: #111; overflow: hidden; }
svg { display: block; overflow: visible; flex: none; }
.defs { position: absolute; width: 0; height: 0; }
.app { width: 1142px; height: 672px; display: flex; flex-direction: column; overflow: hidden; }
.menu { height: 23px; flex: none; display: flex; gap: 14.900px; padding-left: 4px; line-height: 22px; white-space: nowrap; background: #efecea; letter-spacing: -.08px; }
.menu span { flex: none; }
.menu u { text-decoration-thickness: 1px; text-underline-offset: 3px; }

/* toolbars */
.bar { height: 39px; flex: none; display: flex; align-items: center; border-top: 1px solid #b9b5b0; background: linear-gradient(#f8f6f2, #ece9e6); }
.menu + .bar { border-top-color: #d2cfcb; }
.third { height: 39px; }
.bar b { width: 33px; height: 33px; flex: none; display: flex; align-items: center; justify-content: center; font-weight: normal; position: relative; }
.bar b svg, .side svg { width: 24px; height: 24px; }
.bar .on { border: 1px solid #a9a6a3; border-radius: 3px; background: #dddbd8; height: 31px; width: 32px; margin-right: 1px; }
.bar .pinned svg { outline: 1px solid #2a78dc; outline-offset: -1px; }
.dim { --badge: #b4b4b2; --disk: #b0b0ae; --line: #999; --hd: #999; --hf: #ccc; --pen: #bdbdbb; --pl: #a0a09e; --tip: #ccc; --tag: #dcdcda; --tl: #b4b4b2; --pin: #999; --pinl: #888; }
.bar .dim use[href="#abc"], .bar .dim use[href="#ab"] { fill: #888; }
.flip { transform: scaleX(-1); }
.sub::after { content: ""; position: absolute; right: 1px; bottom: 5px; border: 3px solid transparent; border-top-color: #bbb; border-bottom: 0; }
.grip { width: 16px; height: 17px; flex: none; display: flex; justify-content: flex-end; padding-right: 4px; }
.grip::after { content: ""; width: 5px; height: 17px; background: radial-gradient(circle at 1px 1px, #c2beba .6px, transparent .8px) 0 0 / 2px 3px; }
.grip.first { width: 6.500px; padding-right: 2px; }
.grip.wide-gap { width: 17px; }
.arr { width: 12px; flex: none; display: flex; justify-content: center; padding-right: 2px; }
.arr::after { content: ""; border: 4.500px solid transparent; border-top: 5px solid #444; border-bottom: 0; }
.arr.off::after { border-top-color: #bab8b5; }
.more { width: 20px; text-align: right; padding-right: 1px; font-size: 15px; font-weight: bold; }
.more.last { margin-left: 50px; width: 14px; }
.t11 { font: bold 9px "Noto Sans", sans-serif; fill: #777; letter-spacing: -.3px; }
.ti { font: italic bold 15px "Liberation Serif", serif; fill: #fff; }
.tq { font: 16px "Liberation Serif", serif; fill: #fff; }
.tabc { font: bold 8.500px "Noto Sans", sans-serif; fill: inherit; }
.eps { font: 16px "Noto Sans", sans-serif; fill: #aaa; }

/* spin boxes and fields */
.spin, .field { display: flex; border: 1px solid #aaa7a3; border-radius: 3px; background: #fff; overflow: hidden; white-space: nowrap; flex: none; }
.spin em { margin-left: auto; border-left: 1px solid #aaa7a3; width: 14px; display: flex; flex-direction: column; align-items: center; justify-content: center; gap: 8px; background: #fbfaf9; }
.spin em::before { content: ""; border: 4px solid transparent; border-bottom-color: #555; border-top: 0; }
.spin em::after { content: ""; border: 4px solid transparent; border-top-color: #555; border-bottom: 0; }
.tall { width: 118px; height: 26px; background: #efecea; color: #b7b5b2; padding-left: 5px; font-size: 14.500px; line-height: 23px; }
.tall em { justify-content: flex-start; padding-top: 6px; }
.tall em::before { border-bottom-color: #ddd; }
.tall em::after { display: none; }

/* middle */
.work { height: 503px; flex: none; display: flex; border-top: 1px solid #b9b5b0; padding-top: 1px; }
.side { width: 46px; padding: 5px 0 0 2px; background: linear-gradient(90deg, #f8f6f3, #ece9e6); display: flex; flex-direction: column; }
.side div { height: 32px; display: flex; align-items: center; gap: 4px; }
.side .arr { margin-top: 2px; }
.hgrip { width: 17px; height: 5px; margin: 0 0 -1px 10px; flex: none; background: radial-gradient(circle at 1px 1px, #c2beba .6px, transparent .8px) 0 0 / 3px 2.500px; }
.side .hgrip:last-child { margin-top: 9px; }
.dock { width: 271px; display: flex; flex-direction: column; border-left: 1px solid #b3b0ac; }
.dock header { height: 22px; display: flex; align-items: center; padding: 0 2px 0 3px; gap: 3px; line-height: 21px; }
.dock header span { flex: 1; margin-top: -3px; }
.wb { width: 11px; height: 11px; fill: none; stroke: #666; margin-top: -3px; }
.tools { height: 30px; display: flex; align-items: center; gap: 8.900px; padding: 0 0 2px 7px; }
.tools svg { width: 16px; height: 16px; }
.tools .arr { width: 9px; margin: 0 0 0 -5px; padding: 0; }
.tree { list-style: none; margin: 0; padding: 0; height: 417px; border: 1px solid #b3b0ac; border-left-width: 0; background: #fff; }
.tree li { height: 20px; display: flex; align-items: center; white-space: nowrap; }
.tree li i { margin: 0 11px 0 7px; border: 4.500px solid transparent; border-left: 5px solid #444; border-right: 0; }
.tree li svg { width: 16px; height: 16px; margin: 0 6px 0 6px; }
s { width: 14px; height: 14px; border: 1px solid #b5b2ae; background: #fff; flex: none; text-decoration: none; display: flex; align-items: center; justify-content: center; }
s.ck::after { content: ""; width: 5px; height: 8px; border: solid #111; border-width: 0 2px 2px 0; transform: rotate(28deg) skewX(-6deg) translate(-.5px, -1px); }
.tree strong { line-height: 16px; font-size: 14px; letter-spacing: .2px; }
.active { border-bottom: 1px solid #111; margin-top: 1px; }
.tabs { height: 31px; display: flex; align-items: flex-start; padding-top: 1px; }
.tabs span { width: 110px; height: 28px; border: 1px solid #b3b0ac; border-radius: 0 0 3px 3px; background: #dcdad6; text-align: center; line-height: 26px; border-left-width: 0; padding-right: 2px; }
.tabs span:nth-child(2) { width: 87px; }
.tabs .cur { width: 73px; height: 30px; background: #f6f4f1; border-top: 0; line-height: 30px; }
.splitter { width: 6px; background: radial-gradient(circle at 1.500px 1.500px, #aaa .6px, transparent .8px) 2px 0 / 3px 3px; background-repeat: repeat-y; background-clip: content-box; padding: 243px 1px 243px 2px; }
.map { width: 819px; height: 501px; border: 1px solid #b3b0ac; border-width: 0 0 1px 1px; background: #fff; overflow: hidden; }

.map path { fill: none; }
.wide .o { stroke-width: 5.500; stroke: #650065; }
.wide .m { stroke-width: 3; stroke: #e8d8e8; }
.wide.grey .o { stroke: #aaa; stroke-width: 8; }
.wide.grey .m { stroke: #f1f1f1; stroke-width: 5.500; }
.narrow .o { stroke: #650065; stroke-width: 4.600; }
.narrow .m { stroke: #e2d0e2; stroke-width: 1.800; }
.thin { stroke-width: 1.500; }
.gl { stroke: #aaa; }
.pl { stroke: #650065; stroke-width: 1.400; }
.dash { stroke: #650065; stroke-width: 1.500; stroke-dasharray: 4 2; }
.main { stroke: #650065; stroke-width: 2; }
.node circle { fill: #fff; stroke: #650065; stroke-width: 1.400; }
.gn circle { stroke: #aaa; }
.pink circle { fill: #fa14fa; stroke: #222; stroke-width: 1; }
.lab { font: 10px "DejaVu Sans", sans-serif; fill: #6f106f; }
.gt { fill: #999; }

/* status bar */
.status { flex: 1; display: flex; align-items: flex-start; padding-top: 3px; white-space: nowrap; line-height: 26px; background: #f0edea; }
.locate { width: 198px; height: 30px; border: 1px solid #aaa7a3; border-left: 0; border-radius: 0 3px 0 0; background: #fff; display: flex; padding-left: 7px; color: #b5b3b0; font-style: italic; letter-spacing: .38px; }
.locate svg { margin: 7px 6px 0 0; }
.clip { overflow: hidden; display: flex; justify-content: center; flex: none; }
.clip span { flex: none; }
.coord { width: 46px; margin: 0 5px 0 14px; }
.field { height: 30px; }
.pos { width: 125px; justify-content: flex-end; padding-right: 3px; font-size: 14.500px; }
.bug { width: 17px; height: 17px; margin: 5px 13px 0 3px; }
.sc { width: 38px; }
.combo { width: 112px; padding-left: 3px; font-size: 14.500px; }
.combo em { width: 20px; margin-left: auto; border-left: 1px solid #ccc; display: flex; align-items: center; justify-content: center; background: #f8f7f5; height: 26px; }
.combo em::after { content: ""; border: 4px solid transparent; border-top: 5px solid #555; border-bottom: 0; }
.lock { width: 12px; height: 16px; margin: 5px 16px 0 6px; }
.magn { width: 38px; margin-right: 3px; justify-content: flex-start; padding-top: 1px; }
.zoom, .rot { height: 30px; padding-left: 4px; margin-top: 1px; line-height: 25px; font-size: 14.500px; }
.zoom em, .rot em { height: 26px; gap: 7px; }
.zoom { width: 98px; }
.rota { width: 32px; margin: 0 8px 0 9px; }
.rot { width: 95px; }
.status > s { margin: 6px 5px 0 6px; }
.rend { width: 65px; }
.crs { width: 15px; height: 15px; margin: 6px 4px 0 0; }
.epsg { width: 104px; }
.msg { width: 17px; height: 15px; margin-top: 6px; }
.pointer { position: absolute; left: 816px; top: 120px; width: 13px; height: 18px; }
```
